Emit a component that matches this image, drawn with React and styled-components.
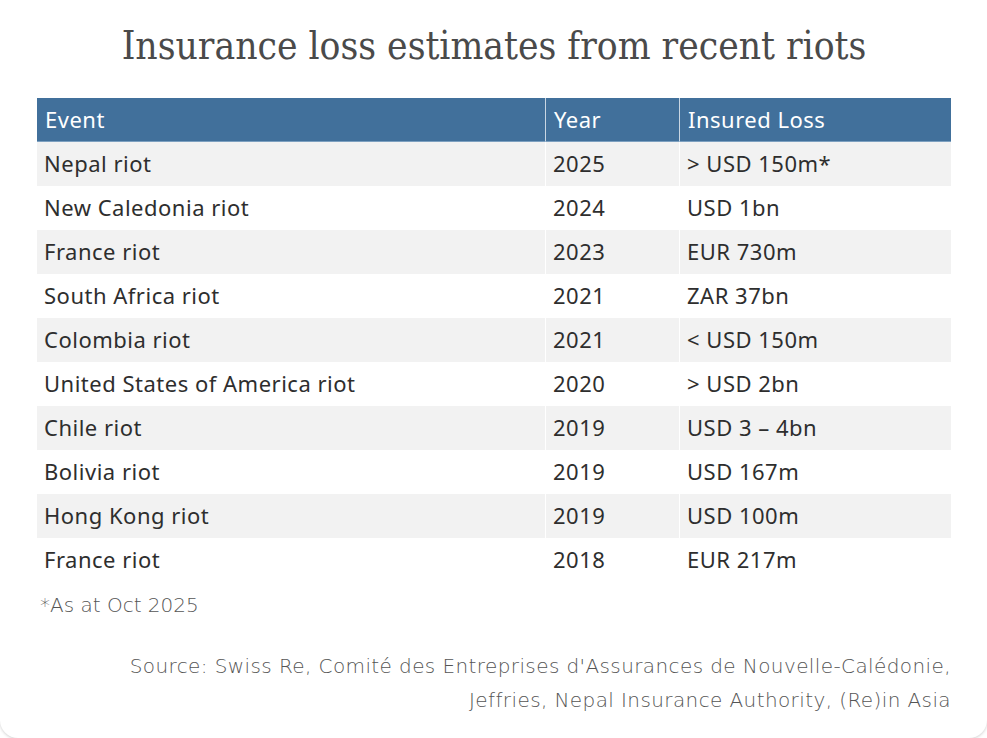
import React from 'react';
import styled, { createGlobalStyle } from 'styled-components';

const GlobalStyle = createGlobalStyle`
  html, body {
    margin: 0;
    padding: 0;
    background: #ffffff;
  }
  * { box-sizing: border-box; }
`;

const Card = styled.div`
  width: 987px;
  height: 738px;
  background: #fff;
  border-radius: 0 0 18px 18px;
  box-shadow: 0 1px 3px rgba(0, 0, 0, 0.18);
  padding: 22px 36px 0 37px;
  display: flex;
  flex-direction: column;
  overflow: hidden;
`;

const Title = styled.h1`
  margin: 0;
  text-align: center;
  font-family: "DejaVu Serif Condensed", "Liberation Serif", serif;
  font-weight: 300;
  font-size: 38.6px;
  line-height: 48px;
  color: #4a4a4a;
`;

const Table = styled.div`
  margin-top: 28px;
  width: 914px;
  display: grid;
  grid-template-columns: 508px 134px 272px;
  font-family: "Noto Sans", "Open Sans", sans-serif;
  font-size: 22px;
  letter-spacing: 0.5px;
`;

const HeadCell = styled.div`
  height: 44px;
  display: flex;
  align-items: center;
  padding-left: 8px;
  padding-bottom: 2px;
  background: #41709b;
  color: #fff;
  border-bottom: 1px solid #7da0c0;
  border-left: ${(p) => (p.first ? 'none' : '1px solid #c9d6e3')};
`;

const Cell = styled.div`
  height: 44px;
  display: flex;
  align-items: center;
  padding-left: 7px;
  padding-bottom: 3px;
  color: #2e2e2e;
  background: ${(p) => (p.shaded ? '#f2f2f2' : '#fff')};
  border-left: ${(p) => (p.first ? 'none' : '1px solid #fff')};
`;

const Note = styled.div`
  margin-top: 9px;
  padding-left: 3px;
  font-family: "DejaVu Sans", "Open Sans", sans-serif;
  font-weight: 200;
  font-size: 20px;
  line-height: 28px;
  color: #555;
`;

const Source = styled.div`
  margin-top: 30px;
  text-align: right;
  font-family: "DejaVu Sans", "Open Sans", sans-serif;
  font-weight: 200;
  font-size: 20px;
  letter-spacing: 0.4px;
  line-height: 34px;
  color: #555;
`;

const rows = [
  ['Nepal riot', '2025', '> USD 150m*'],
  ['New Caledonia riot', '2024', 'USD 1bn'],
  ['France riot', '2023', 'EUR 730m'],
  ['South Africa riot', '2021', 'ZAR 37bn'],
  ['Colombia riot', '2021', '< USD 150m'],
  ['United States of America riot', '2020', '> USD 2bn'],
  ['Chile riot', '2019', 'USD 3 – 4bn'],
  ['Bolivia riot', '2019', 'USD 167m'],
  ['Hong Kong riot', '2019', 'USD 100m'],
  ['France riot', '2018', 'EUR 217m'],
];

export default function App() {
  return (
    <>
      <GlobalStyle />
      <Card>
        <Title>Insurance loss estimates from recent riots</Title>
        <Table>
          <HeadCell first>Event</HeadCell>
          <HeadCell>Year</HeadCell>
          <HeadCell>Insured Loss</HeadCell>
          {rows.map((r, i) =>
            r.map((c, j) => (
              <Cell key={`${i}-${j}`} first={j === 0} shaded={i % 2 === 0}>
                {c}
              </Cell>
            ))
          )}
        </Table>
        <Note>*As at Oct 2025</Note>
        <Source>
          Source: Swiss Re, Comité des Entreprises d'Assurances de Nouvelle-Calédonie,
          <br />
          Jeffries, Nepal Insurance Authority, (Re)in Asia
        </Source>
      </Card>
    </>
  );
}
